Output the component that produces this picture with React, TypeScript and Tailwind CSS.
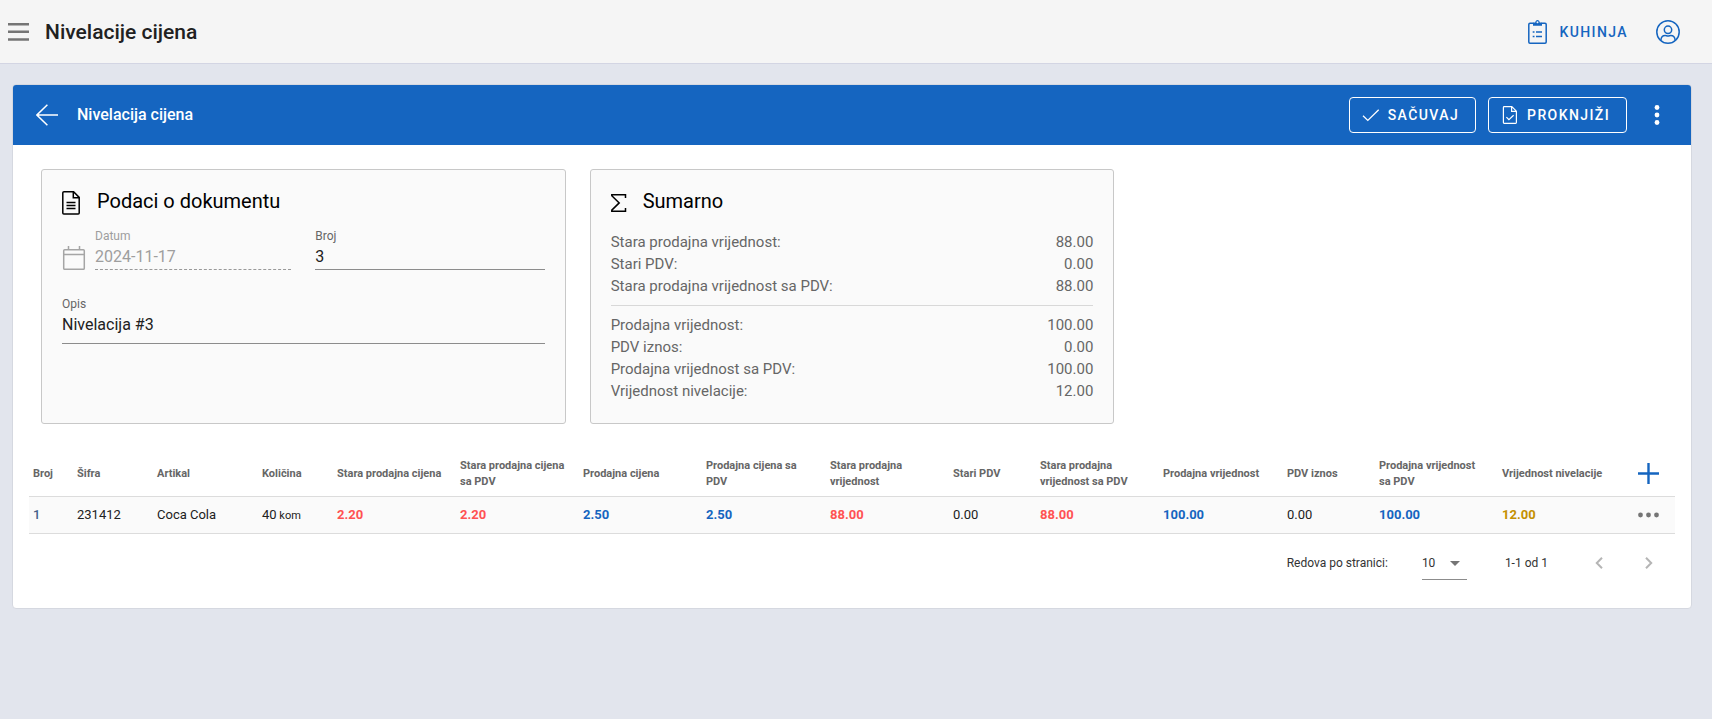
import type { ReactNode } from "react";

interface Column {
  label: string;
  width: string;
}

interface Cell {
  value: string;
  unit?: string;
  tone: string;
}

const columns: Column[] = [
  { label: "Broj", width: "w-[44px]" },
  { label: "Šifra", width: "w-[80px]" },
  { label: "Artikal", width: "w-[105px]" },
  { label: "Količina", width: "w-[75px]" },
  { label: "Stara prodajna cijena", width: "w-[123px]" },
  { label: "Stara prodajna cijena sa PDV", width: "w-[123px]" },
  { label: "Prodajna cijena", width: "w-[123px]" },
  { label: "Prodajna cijena sa PDV", width: "w-[124px]" },
  { label: "Stara prodajna vrijednost", width: "w-[123px]" },
  { label: "Stari PDV", width: "w-[87px]" },
  { label: "Stara prodajna vrijednost sa PDV", width: "w-[123px]" },
  { label: "Prodajna vrijednost", width: "w-[124px]" },
  { label: "PDV iznos", width: "w-[92px]" },
  { label: "Prodajna vrijednost sa PDV", width: "w-[123px]" },
  { label: "Vrijednost nivelacije", width: "w-[124px]" },
];

const PLAIN = "text-[#212121]";
const OLD = "font-bold text-[#ff5252]";
const NEW = "font-bold text-[#1565c0]";

const rows: Cell[][] = [
  [
    { value: "1", tone: "font-medium text-[#45618a]" },
    { value: "231412", tone: PLAIN },
    { value: "Coca Cola", tone: PLAIN },
    { value: "40", unit: "kom", tone: PLAIN },
    { value: "2.20", tone: OLD },
    { value: "2.20", tone: OLD },
    { value: "2.50", tone: NEW },
    { value: "2.50", tone: NEW },
    { value: "88.00", tone: OLD },
    { value: "0.00", tone: PLAIN },
    { value: "88.00", tone: OLD },
    { value: "100.00", tone: NEW },
    { value: "0.00", tone: PLAIN },
    { value: "100.00", tone: NEW },
    { value: "12.00", tone: "font-bold text-[#c49000]" },
  ],
];

const oldTotals = [
  ["Stara prodajna vrijednost:", "88.00"],
  ["Stari PDV:", "0.00"],
  ["Stara prodajna vrijednost sa PDV:", "88.00"],
];

const newTotals = [
  ["Prodajna vrijednost:", "100.00"],
  ["PDV iznos:", "0.00"],
  ["Prodajna vrijednost sa PDV:", "100.00"],
  ["Vrijednost nivelacije:", "12.00"],
];

function MenuIcon() {
  return (
    <svg width="21" height="18" viewBox="0 0 21 18" fill="#757575">
      <path d="M0 0h21v2.5H0zM0 7.500h21V10H0zM0 15.200h21v2.500H0z" />
    </svg>
  );
}

function ClipboardIcon() {
  return (
    <svg width="19" height="24" viewBox="0 0 19 24" fill="none" stroke="currentColor" strokeWidth="1.500">
      <path d="M5.500 3.300H2c-.7 0-1.200.5-1.200 1.200v17.500c0 .7.5 1.200 1.200 1.200h15c.7 0 1.200-.5 1.200-1.200V4.500c0-.7-.5-1.200-1.200-1.200h-3.500" />
      <path
        d="M5 5.800V2.600h2.200C7.500 1 8.300 0 9.500 0s2 1 2.300 2.600H14v3.200zM9.500 1.300a1 1 0 1 0 0 2 1 1 0 0 0 0-2z"
        fill="currentColor"
        fillRule="evenodd"
        stroke="none"
      />
      <path d="M4.700 12h1.800M8 12h6M4.700 16.500h1.800M8 16.500h6" strokeWidth="1.500" />
    </svg>
  );
}

function UserIcon() {
  return (
    <svg width="24" height="24" viewBox="0 0 24 24" fill="none" stroke="currentColor" strokeWidth="1.500">
      <circle cx="12" cy="12" r="11.200" />
      <circle cx="12" cy="9.800" r="3.700" />
      <path d="M4.900 20.300c.1-2.900 1.900-4.900 4.300-4.900 1 0 1.600.6 2.800.6s1.800-.6 2.800-.6c2.400 0 4.200 2 4.300 4.900" />
    </svg>
  );
}

function BackIcon() {
  return (
    <svg width="22" height="22" viewBox="0 0 22 22" fill="none" stroke="currentColor" strokeWidth="1.500">
      <path d="M11.400.7.9 11l10.500 10.300M1 11h21" />
    </svg>
  );
}

function CheckIcon() {
  return (
    <svg width="18" height="18" viewBox="0 0 18 18" fill="none" stroke="currentColor" strokeWidth="1.300">
      <path d="m1 9.700 4.800 4.700L16.700 3.700" />
    </svg>
  );
}

function FileCheckIcon() {
  return (
    <svg width="18" height="18" viewBox="0 0 18 18" fill="none" stroke="currentColor" strokeWidth="1.200">
      <path d="M3.200.6h7.600l4.600 4.600v11.400c0 .5-.3.800-.8.800H3.200c-.5 0-.8-.3-.8-.8V1.400c0-.5.300-.8.800-.8zM10.600.6v4.800h4.800" />
      <path d="m5.400 11.200 2.500 2.500 4.700-4.500" />
    </svg>
  );
}

function FileTextIcon() {
  return (
    <svg width="19" height="25" viewBox="0 0 19 25" fill="none" stroke="currentColor" strokeWidth="1.500">
      <path d="M2 1.800h9.600l5.600 5.600v15.500c0 .6-.4 1-1 1H1.800c-.6 0-1-.4-1-1V2.800c0-.6.400-1 1.200-1zM11.300 1.800v5.900h5.900" />
      <path d="M4.500 12.500h9M4.500 15.500h9M4.500 18.500h9" />
    </svg>
  );
}

function CalendarIcon() {
  return (
    <svg width="24" height="24" viewBox="0 0 24 24" fill="none" stroke="#a5a5a5" strokeWidth="1.500">
      <rect x="1.700" y="3.700" width="20.600" height="19.600" rx="1" />
      <path d="M1.700 8.500h20.600M6.500 0v4M17.500 0v4" />
    </svg>
  );
}

function SigmaIcon() {
  return (
    <svg width="16" height="25" viewBox="0 0 16 25" fill="none" stroke="currentColor" strokeWidth="1.500">
      <path d="M14.500 8V4.700H.8v1l7.400 7.200-7.400 7.200v1.200h13.700v-3.300" />
    </svg>
  );
}

function PlusIcon() {
  return (
    <svg width="21" height="21" viewBox="0 0 21 21" stroke="#1565c0" strokeWidth="2.400">
      <path d="M0 10.500h21M10.500 0v21" />
    </svg>
  );
}

function Dots({ vertical = false }: { vertical?: boolean }) {
  return vertical ? (
    <svg width="6" height="20" viewBox="0 0 6 20" fill="currentColor">
      <circle cx="3" cy="2.500" r="2.400" />
      <circle cx="3" cy="10" r="2.400" />
      <circle cx="3" cy="17.500" r="2.400" />
    </svg>
  ) : (
    <svg width="21" height="6" viewBox="0 0 21 6" fill="currentColor">
      <circle cx="2.500" cy="3" r="2.400" />
      <circle cx="10.500" cy="3" r="2.400" />
      <circle cx="18.500" cy="3" r="2.400" />
    </svg>
  );
}

function Chevron({ right = false }: { right?: boolean }) {
  return (
    <svg width="8" height="12" viewBox="0 0 8 12" fill="none" stroke="#b5b5b5" strokeWidth="2">
      <path d={right ? "m1 .8 5.200 5.200L1 11.200" : "M7 .8 1.800 6 7 11.200"} />
    </svg>
  );
}

function Panel({ icon, title, children }: { icon: ReactNode; title: string; children: ReactNode }) {
  return (
    <section className="rounded-[3px] border border-[#c8c8c8] bg-[#fafafa] p-5">
      <h2 className="flex items-start gap-4 text-xl leading-[22px] text-black">
        {icon}
        {title}
      </h2>
      {children}
    </section>
  );
}

function Totals({ items }: { items: string[][] }) {
  return (
    <dl className="text-[15px] leading-[22px] text-[#666]">
      {items.map(([label, value]) => (
        <div key={label} className="flex justify-between">
          <dt>{label}</dt>
          <dd>{value}</dd>
        </div>
      ))}
    </dl>
  );
}

function Header() {
  return (
    <header className="flex h-16 items-center border-b border-[#d3d5e3] bg-[#f5f5f5] pr-8 pl-2">
      <button type="button" aria-label="Meni">
        <MenuIcon />
      </button>
      <h1 className="ml-4 text-[21px] leading-8 font-medium text-[#212121]">Nivelacije cijena</h1>
      <div className="ml-auto flex items-center gap-7 text-[#1565c0]">
        <button type="button" className="flex items-center gap-3 text-sm font-medium tracking-widest">
          <ClipboardIcon />
          KUHINJA
        </button>
        <button type="button" aria-label="Korisnik">
          <UserIcon />
        </button>
      </div>
    </header>
  );
}

function Toolbar() {
  return (
    <div className="flex h-15 items-center rounded-t-[3px] bg-[#1565c0] pr-[31px] pl-[23px] text-white">
      <button type="button" aria-label="Nazad">
        <BackIcon />
      </button>
      <h2 className="ml-[19px] font-medium">Nivelacija cijena</h2>
      <div className="ml-auto flex items-center gap-3">
        <button
          type="button"
          className="flex h-9 items-center gap-2 rounded-sm border border-white pr-4 pl-3 text-sm font-medium tracking-widest"
        >
          <CheckIcon />
          SAČUVAJ
        </button>
        <button
          type="button"
          className="flex h-9 items-center gap-2 rounded-sm border border-white pr-4 pl-3 text-sm font-medium tracking-widest"
        >
          <FileCheckIcon />
          PROKNJIŽI
        </button>
        <button type="button" aria-label="Više opcija" className="ml-[15px]">
          <Dots vertical />
        </button>
      </div>
    </div>
  );
}

function DocumentFields() {
  return (
    <div className="mt-[13px]">
      <div className="grid grid-cols-2 gap-6">
        <div className="flex items-end gap-[9px]">
          <CalendarIcon />
          <div className="min-w-0 flex-1">
            <label htmlFor="datum" className="block text-xs leading-4 text-[#9e9e9e]">
              Datum
            </label>
            <input
              id="datum"
              disabled
              defaultValue="2024-11-17"
              className="block h-[26px] w-full border-b border-dashed border-[#999] text-base text-[#9e9e9e]"
            />
          </div>
        </div>
        <div>
          <label htmlFor="broj" className="block text-xs leading-4 text-[#666]">
            Broj
          </label>
          <input
            id="broj"
            defaultValue="3"
            className="block h-[26px] w-full border-b border-[#8c8c8c] text-base text-[#212121]"
          />
        </div>
      </div>
      <label htmlFor="opis" className="mt-[26px] block text-xs leading-4 text-[#666]">
        Opis
      </label>
      <textarea
        id="opis"
        rows={1}
        defaultValue="Nivelacija #3"
        className="block h-8 w-full resize-none overflow-hidden border-b border-[#8c8c8c] text-base leading-[26px] text-[#212121]"
      />
    </div>
  );
}

function ItemsTable() {
  return (
    <table className="w-full table-fixed border-separate border-spacing-0 text-left">
      <thead>
        <tr>
          {columns.map((col) => (
            <th
              key={col.label}
              className={`${col.width} h-[45px] border-b border-[#dcdcdc] pr-3 pl-1 text-[11px] leading-4 font-bold text-[#666]`}
            >
              {col.label}
            </th>
          ))}
          <th className="w-[53px] border-b border-[#dcdcdc] pb-0.5 align-middle">
            <button type="button" aria-label="Dodaj stavku" className="mx-auto block">
              <PlusIcon />
            </button>
          </th>
        </tr>
      </thead>
      <tbody>
        {rows.map((row) => (
          <tr key={row[0].value} className="bg-[#fafafa]">
            {row.map((cell, i) => (
              <td
                key={columns[i].label}
                className={`h-[37px] border-b border-[#dcdcdc] px-1 text-[13px] leading-5 ${cell.tone}`}
              >
                {cell.value}
                {cell.unit && <span className="text-[11px]"> {cell.unit}</span>}
              </td>
            ))}
            <td className="border-b border-[#dcdcdc] align-middle text-[#757575]">
              <button type="button" aria-label="Opcije stavke" className="mx-auto block">
                <Dots />
              </button>
            </td>
          </tr>
        ))}
      </tbody>
    </table>
  );
}

function Pagination() {
  return (
    <div className="flex h-[58px] items-center justify-end pr-[22px] text-xs text-[#333]">
      <label htmlFor="per-page">Redova po stranici:</label>
      <div className="relative ml-[34px]">
        <select
          id="per-page"
          defaultValue="10"
          className="block h-[33px] w-[45px] appearance-none border-b border-[#8c8c8c] text-xs"
        >
          <option>10</option>
          <option>25</option>
          <option>50</option>
        </select>
        <svg
          className="pointer-events-none absolute top-3.5 right-[7px]"
          width="10"
          height="5"
          viewBox="0 0 10 5"
          fill="#757575"
        >
          <path d="M0 0h10L5 5z" />
        </svg>
      </div>
      <span className="ml-[38px]">1-1 od 1</span>
      <button type="button" disabled aria-label="Prethodna stranica" className="ml-[47px]">
        <Chevron />
      </button>
      <button type="button" disabled aria-label="Sljedeća stranica" className="ml-[42px]">
        <Chevron right />
      </button>
    </div>
  );
}

export default function App() {
  return (
    <div className="min-h-screen bg-[#e2e5ed] font-[Roboto,sans-serif]">
      <Header />
      <main className="pt-5 pr-5 pb-5 pl-3">
        <div className="rounded-sm border border-[#d5d8e0] bg-white pb-4">
          <Toolbar />
          <div className="grid grid-cols-3 gap-6 px-7 pt-6">
            <Panel icon={<FileTextIcon />} title="Podaci o dokumentu">
              <DocumentFields />
            </Panel>
            <Panel icon={<SigmaIcon />} title="Sumarno">
              <div className="mt-4 pb-px">
                <Totals items={oldTotals} />
                <hr className="my-2 border-[#d8d8d8]" />
                <Totals items={newTotals} />
              </div>
            </Panel>
          </div>
          <div className="mx-4 mt-7">
            <ItemsTable />
            <Pagination />
          </div>
        </div>
      </main>
    </div>
  );
}
